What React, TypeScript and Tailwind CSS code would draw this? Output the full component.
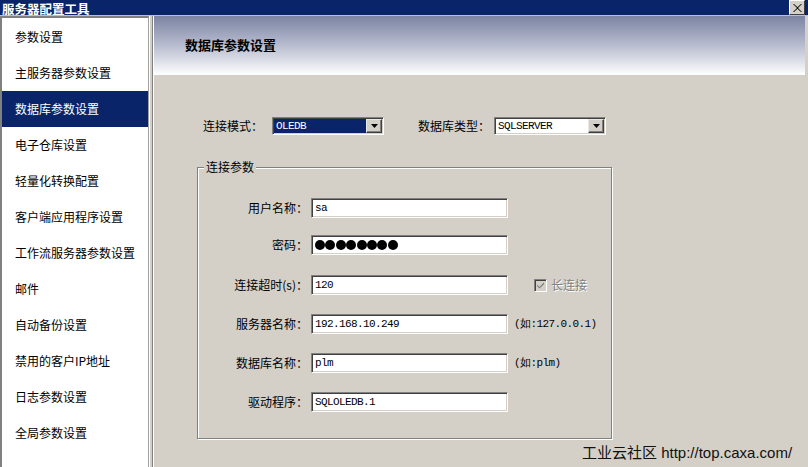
import React from 'react'

const menu = [
    '参数设置',
    '主服务器参数设置',
    '数据库参数设置',
    '电子仓库设置',
    '轻量化转换配置',
    '客户端应用程序设置',
    '工作流服务器参数设置',
    '邮件',
    '自动备份设置',
    '禁用的客户IP地址',
    '日志参数设置',
    '全局参数设置',
]

const sunken =
    'bg-white border border-t-[#808080] border-l-[#808080] border-b-white border-r-white shadow-[inset_1px_1px_0_#404040,inset_-1px_-1px_0_#d4d0c8]'

const mono = "font-['Liberation_Mono',monospace] text-[11px] tracking-[-0.6px]"

const DropButton = () => (
    <div className="w-[16px] h-[14px] flex items-center justify-center bg-[#d4d0c8] border border-t-[#e8e8e8] border-l-[#e8e8e8] border-b-[#404040] border-r-[#404040] shadow-[inset_-1px_-1px_0_#808080]">
        <svg width="7" height="4" viewBox="0 0 7 4">
            <path d="M0 0h7L3.5 4z" fill="#000" />
        </svg>
    </div>
)

const Select = ({ value, active }: { value: string; active?: boolean }) => (
    <div className={`${sunken} w-[112px] h-[18px] flex items-center pl-[1px] pr-[1px]`}>
        <div className={`flex-1 h-[14px] flex items-center pl-[2px] ${mono} ${active ? 'bg-[#0a246a] text-white' : 'text-black'}`}>
            {value}
        </div>
        <DropButton />
    </div>
)

const Field = ({ label, value, top, children }: { label: string; value?: string; top: string; children?: React.ReactNode }) => (
    <div className={`flex items-center ${top}`}>
        <div className="w-[110px] text-right">{label}</div>
        <div className={`${sunken} ml-[3px] w-[197px] h-[20px] flex items-center pl-[3px] ${mono}`}>
            {value}
        </div>
        {children}
    </div>
)

export default function App() {
    return (
        <div className="relative w-[808px] h-[467px] overflow-hidden flex flex-col bg-[#d4d0c8] text-[12px] text-black font-['Noto_Sans_CJK_SC',sans-serif]">
            <div className="h-[16px] flex justify-between bg-[#0a246a] border-b border-[#b8bfd8]">
                <span className="self-start mt-[3px] pl-[2px] text-white font-bold text-[12.5px] leading-[12px]">服务器配置工具</span>
                <div className="mr-[3px] w-[16px] h-[15px] flex items-center justify-center bg-[#d4d0c8] border border-t-white border-l-white border-b-[#404040] border-r-[#404040]">
                    <svg width="9" height="8" viewBox="0 0 9 8">
                        <path d="M1 0l3.5 3.2L8 0h1L5 4l4 4H8L4.5 4.8 1 8H0l4-4-4-4z" fill="#000" />
                    </svg>
                </div>
            </div>

            <div className="flex flex-1 min-h-0">
                <div className="w-[149px] bg-white border-l-2 border-t-2 border-l-[#808080] border-t-[#808080] border-r border-r-[#a0a0a0] pt-[1px]">
                    {menu.map((m, i) => (
                        <div
                            key={m}
                            className={`h-[36px] flex items-center pl-[13px] ${i === 2 ? 'bg-[#0a246a] text-white' : ''}`}
                        >
                            {m}
                        </div>
                    ))}
                </div>
                <div className="w-[4px] border-l border-white border-r border-r-[#808080]"></div>

                <div className="flex-1 flex flex-col border-l border-white mr-[3px]">
                    <div className="h-[59px] bg-gradient-to-b from-[#7c84a3] via-[#b8bdcf] to-white pl-[31px] pt-[19px]">
                        <span className="font-bold text-[13px]">数据库参数设置</span>
                    </div>

                    <div className="pl-[43px] pt-[42px]">
                        <div className="flex items-center ml-[6px]">
                            <span className="w-[69px]">连接模式：</span>
                            <Select value="OLEDB" active />
                            <span className="ml-[34px] w-[76px]">数据库类型：</span>
                            <Select value="SQLSERVER" />
                        </div>

                        <div className="relative mt-[32px] w-[415px] h-[272px] border border-[#808080] shadow-[inset_1px_1px_0_#fff,1px_1px_0_#fff] pt-[30px]">
                            <span className="absolute -top-[10px] left-[6px] px-[2px] bg-[#d4d0c8] leading-[18px]">连接参数</span>

                            <Field label="用户名称：" value="sa" top="mt-0" />
                            <div className="flex items-center mt-[17px]">
                                <div className="w-[110px] text-right">密码：</div>
                                <div className={`${sunken} ml-[3px] w-[197px] h-[20px] flex items-center pl-[3px]`}>
                                    {Array.from({ length: 8 }).map((_, i) => (
                                        <span key={i} className="w-[10px] h-[10px] rounded-full bg-black mr-[0.4px]"></span>
                                    ))}
                                </div>
                            </div>
                            <Field label="连接超时(s)：" value="120" top="mt-[20px]">
                                <div className="ml-[26px] flex items-center">
                                    <div className="w-[13px] h-[13px] flex items-center justify-center bg-[#d4d0c8] border border-t-[#808080] border-l-[#808080] border-b-white border-r-white shadow-[inset_1px_1px_0_#404040]">
                                        <svg width="9" height="8" viewBox="0 0 9 8">
                                            <path d="M1 3.5l2.5 2.5L8 1.2v2L3.5 7.5 1 5z" fill="#808080" />
                                        </svg>
                                    </div>
                                    <span className="ml-[4px] text-[#808080] [text-shadow:1px_1px_0_#fff]">长连接</span>
                                </div>
                            </Field>
                            <Field label="服务器名称：" value="192.168.10.249" top="mt-[19px]">
                                <span className={`ml-[6px] ${mono}`}>(如:127.0.0.1)</span>
                            </Field>
                            <Field label="数据库名称：" value="plm" top="mt-[19px]">
                                <span className={`ml-[6px] ${mono}`}>(如:plm)</span>
                            </Field>
                            <Field label="驱动程序：" value="SQLOLEDB.1" top="mt-[19px]" />
                        </div>
                    </div>
                </div>
            </div>

            <div className="absolute left-[582px] top-[442px] text-[15px] text-[#111] font-['Liberation_Sans','Noto_Sans_CJK_SC',sans-serif]">
                工业云社区 http://top.caxa.com/
            </div>
        </div>
    )
}
